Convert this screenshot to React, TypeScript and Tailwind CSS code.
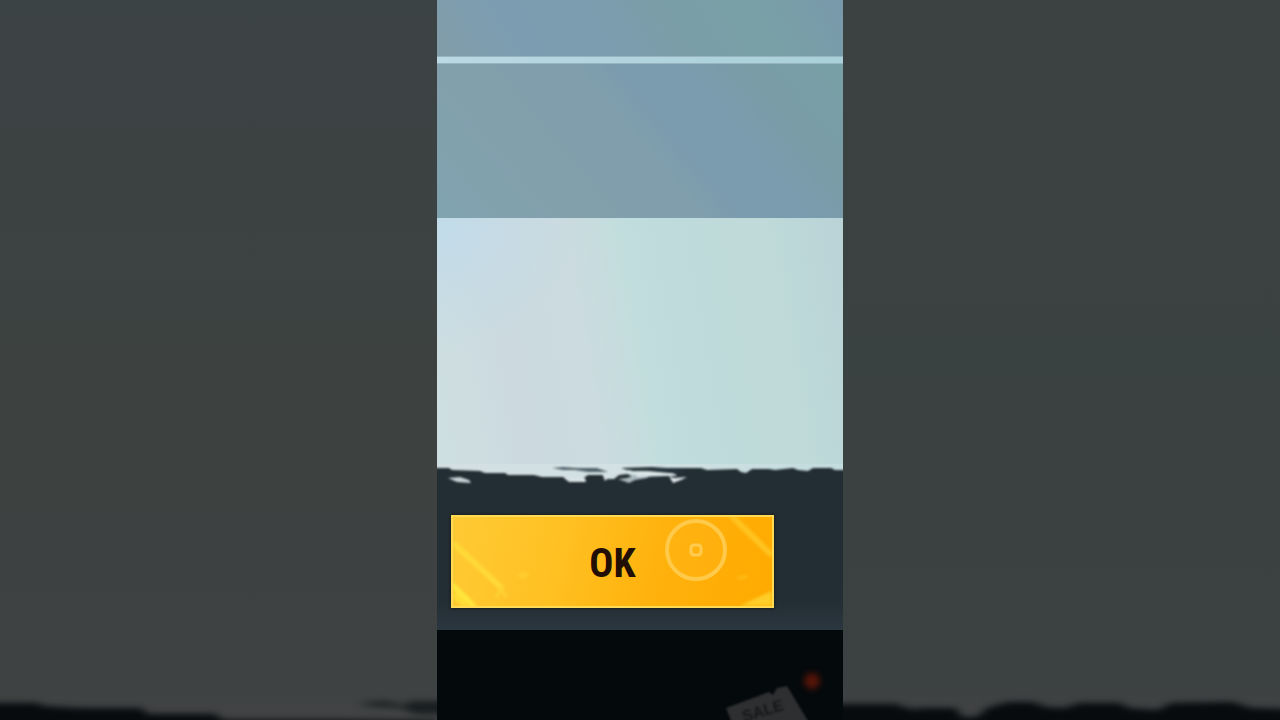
type SideProps = { className: string; path: string; streak: string; id: string };

function SidePanel({ className, path, streak, id }: SideProps) {
  return (
    <div aria-hidden="true" className={`flex min-w-0 flex-1 flex-col justify-end overflow-hidden ${className}`}>
      <svg className="block h-10 w-full" viewBox="0 0 437 40" preserveAspectRatio="none">
        <defs>
          <filter id={id} x="-5%" y="-50%" width="110%" height="200%" colorInterpolationFilters="sRGB">
            <feGaussianBlur stdDeviation="5 3" />
          </filter>
          <linearGradient id={`${id}-haze`} x1="0" y1="0" x2="0" y2="1">
            <stop offset="0" stopColor="#424344" stopOpacity="0" />
            <stop offset="1" stopColor="#424344" />
          </linearGradient>
        </defs>
        <rect width="437" height="40" fill={`url(#${id}-haze)`} />
        <g filter={`url(#${id})`}>
          <path d={path} fill="#070b0e" />
          <path d={streak} fill="#191e20" />
        </g>
      </svg>
    </div>
  );
}

function BrushEdge() {
  return (
    <svg aria-hidden="true" className="block h-6 w-full" viewBox="0 0 406 24" preserveAspectRatio="none">
      <defs>
        <filter id="edge-soft" x="-2%" y="-10%" width="104%" height="120%" colorInterpolationFilters="sRGB">
          <feGaussianBlur stdDeviation="1" />
        </filter>
        <linearGradient id="edge-light" x1="0" x2="1">
          <stop offset="0" stopColor="#d3dfe2" />
          <stop offset="0.45" stopColor="#d3e1e4" />
          <stop offset="1" stopColor="#c3dcde" />
        </linearGradient>
      </defs>
      <rect width="406" height="24" fill="url(#edge-light)" />
      <g filter="url(#edge-soft)">
        <path
          fill="#232d34"
          d="M-5 4 L12 4 L15 6 L43 7 L48 9 L68 9 L71 11 L97 11 L105 13 L126 13 L129 15 L145 15 L148 13 L151 11 L166 11 L168 15 L177 15 L182 11 L190 10 L198 13 L230 12 L237 9 L231 6 L196 7 L188 4 L204 4 L264 4 L270 6 L300 5 L304 8 L309 9 L315 5 L332 5 L338 6 L356 4 L361 6 L371 7 L376 4 L394 4 L398 6 L411 6 L411 30 L-5 30Z"
        />
        <path d="M115 4 L126 3 L139 4 L160 4 L171 8 L151 8 L138 6 L126 6Z" fill="#52626a" />
        <path d="M184 4 L215 3 L244 5 L248 9 L232 9 L211 7 L190 6Z" fill="#26333a" />
        <path d="M11 14 L23 13 L32 16 L34 19 L20 18Z" fill="#c6d2d6" />
        <path d="M127 14 L148 14 L149 18 L132 18Z M165 9 L171 14 L168 17Z" fill="#d9e3e6" />
        <path d="M181 15 L190 14 L197 11 L214 11 L210 14 L198 16 L192 19Z" fill="#a9b7bc" />
        <path d="M198 9 L214 8 L238 10 L240 12 L216 12 L200 13Z" fill="#dce6e9" />
        <path d="M232 12 L237 14 L250 13 L244 16 L236 19Z" fill="#dce6e9" />
      </g>
    </svg>
  );
}

function ButtonArt() {
  return (
    <svg aria-hidden="true" className="absolute inset-0 h-full w-full" viewBox="0 0 323 93" preserveAspectRatio="none">
      <defs>
        <filter id="art-soft" colorInterpolationFilters="sRGB">
          <feGaussianBlur stdDeviation="1.5" />
        </filter>
      </defs>
      <g filter="url(#art-soft)" fill="none">
        <path d="M0 27 L50 75" stroke="#ffd938" strokeWidth="6" />
        <path d="M-2 70 L22 94" stroke="#ffe53c" strokeWidth="6" />
        <path d="M0 81 L14 93" stroke="#ffdd35" strokeWidth="6" />
        <path d="M43 85 L49 75 L54 84" stroke="#ffd235" strokeWidth="3" />
        <path d="M64 61 L72 57 L78 61 L70 65Z" fill="#ffce2e" />
        <path d="M281 -2 L323 40" stroke="#ffc421" strokeWidth="6" />
        <path d="M290 93 L323 77 V93Z" fill="#ffcd28" />
        <path d="M288 64 L298 62" stroke="#ffb912" strokeWidth="4" />
      </g>
    </svg>
  );
}

function TouchRing() {
  return (
    <svg aria-hidden="true" className="pointer-events-none absolute right-[43px] top-0 h-[66px] w-[66px]" viewBox="0 0 66 66">
      <circle cx="33" cy="33" r="29" fill="#ffc43b" fillOpacity="0.12" stroke="#ffc94a" strokeWidth="4" />
      <rect x="28" y="28" width="10" height="10" rx="3" fill="none" stroke="#ffcb50" strokeWidth="3" />
    </svg>
  );
}

function Backdrop() {
  return (
    <div className="flex min-h-20 flex-1 items-end justify-end overflow-hidden bg-[#04090c]">
      <svg aria-hidden="true" className="block h-[60px] w-[130px]" viewBox="0 0 130 60">
        <defs>
          <filter id="ticket-soft" colorInterpolationFilters="sRGB">
            <feGaussianBlur stdDeviation="1" />
          </filter>
          <filter id="dot-soft" x="-50%" y="-50%" width="200%" height="200%" colorInterpolationFilters="sRGB">
            <feGaussianBlur stdDeviation="3" />
          </filter>
        </defs>
        <g filter="url(#ticket-soft)">
          <path d="M13 48 L56 32 L60 35 L64 28 L74 26 L98 66 L20 66Z" fill="#2e2f30" />
          <text x="31" y="62" transform="rotate(-17 31 62)" fill="#15171a" className="font-['Liberation_Sans'] text-[16px] font-bold">
            SALE
          </text>
        </g>
        <circle cx="99" cy="21" r="8" fill="#561408" filter="url(#dot-soft)" />
      </svg>
    </div>
  );
}

export default function App() {
  return (
    <div className="flex min-h-screen w-full bg-[#3c4141]">
      <SidePanel
        id="left-edge"
        className="bg-linear-to-b from-[#3c4344] via-[#3d4241] to-[#3e4242]"
        path="M-20 23 H38 L43 26 L80 28 H142 L147 34 H215 L222 40 H320 L437 41 V60 H-20Z"
        streak="M358 23 L385 21 L403 25 L412 21 L457 21 V34 H415 L402 28 L370 26Z"
      />
      <main className="flex w-[406px] shrink-0 flex-col bg-[#232d34]">
        <header>
          <div className="h-14 bg-[linear-gradient(60deg,#829da9_0%,#7c9db1_20%,#7c9dae_45%,#7a9ea7_60%,#79a0a7_80%,#7899ab_100%)]" />
          <div className="h-2 border-y border-[#96b5c0] bg-linear-to-r from-[#bbd8e3] to-[#a9d0db]" />
          <div className="h-[154px] bg-[linear-gradient(50deg,#80a3af_0%,#829fac_25%,#809eac_50%,#7b9caf_58%,#7b9caf_68%,#799ca7_82%,#79a0a6_100%)]" />
        </header>
        <section className="h-[246px] bg-[linear-gradient(80deg,#cedfe1_0%,#ccdadf_20%,#cbdbdf_38%,#c2dddd_50%,#bfdada_65%,#bfdad9_82%,#b9d3d7_100%)]">
          <div className="h-full bg-[radial-gradient(circle_at_0%_0%,#bfdbebdd_0px,#bfdbeb00_140px)]" />
        </section>
        <BrushEdge />
        <footer className="h-[142px] bg-linear-to-b from-[#232d34] from-80% to-[#2b373f] pb-[22px] pl-3.5 pr-[69px] pt-[27px]">
          <button
            type="button"
            className="relative flex h-[93px] w-full cursor-pointer items-center justify-center overflow-hidden border-2 border-[#ffda55] bg-[linear-gradient(105deg,#ffca35_0%,#ffc021_35%,#ffb10c_65%,#ffaa00_100%)] pt-1 shadow-[0_0_3px_#15130b]"
          >
            <ButtonArt />
            <span className="relative font-['Liberation_Sans_Narrow','Roboto_Condensed','Open_Sans_Condensed','DejaVu_Sans_Condensed',sans-serif] text-[40px] font-bold leading-none text-[#210e05]">
              OK
            </span>
            <TouchRing />
          </button>
        </footer>
        <Backdrop />
      </main>
      <SidePanel
        id="right-edge"
        className="bg-linear-to-b from-[#3b4241] via-[#3a4141] to-[#3c4141]"
        path="M-20 24 H55 L62 28 H113 L119 37 H134 L144 28 L165 22 H190 L203 27 L222 28 L236 23 H277 L286 28 L315 30 L328 23 L390 22 L408 28 L457 29 V60 H-20Z"
        streak="M65 29 H78 L72 33Z"
      />
    </div>
  );
}
